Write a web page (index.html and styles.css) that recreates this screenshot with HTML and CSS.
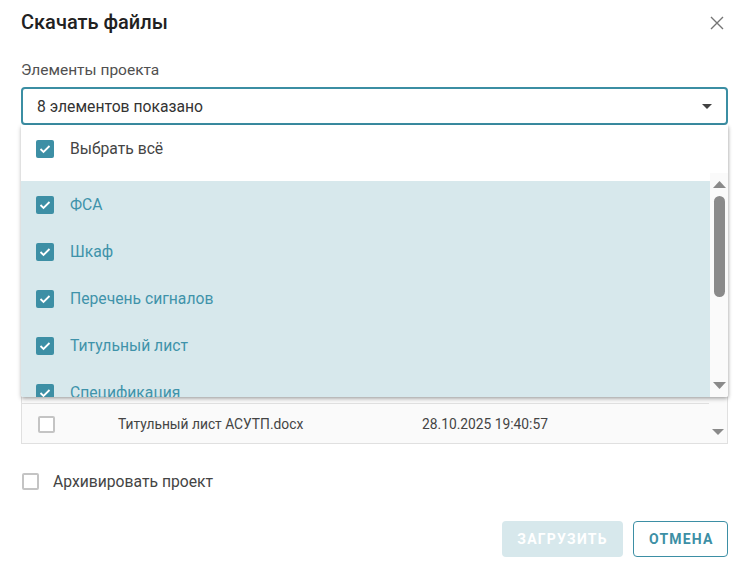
FILE: index.html
```html
<!DOCTYPE html>
<html lang="ru">
<head>
<meta charset="utf-8">
<link rel="stylesheet" href="styles.css">
</head>
<body>
<div class="dialog">
  <div class="header">
    <h1 class="title">Скачать файлы</h1>
    <svg class="close" width="14" height="14" viewBox="0 0 14 14"><path d="M1 1L13 13M13 1L1 13" stroke="#757575" stroke-width="1.4" fill="none"/></svg>
  </div>
  <div class="label">Элементы проекта</div>
  <div class="field">
    <div class="select">
      <span>8 элементов показано</span>
      <svg class="caret" width="10" height="5" viewBox="0 0 10 5"><path d="M0 0H10L5 5Z" fill="#424242"/></svg>
    </div>
    <div class="table">
      <div class="table-body">
        <div class="trow"><span class="cb"></span><span class="tname">Титульный лист АСУТП.docx</span><span class="tdate">28.10.2025 19:40:57</span></div>
      </div>
      <div class="table-scroll">
        <svg width="12" height="6" viewBox="0 0 12 6"><path d="M0 0H12L6 6Z" fill="#8a8a8a"/></svg>
      </div>
    </div>
    <div class="dropdown">
      <div class="opt-all">
        <span class="cbx on"><svg width="12" height="10" viewBox="0 0 12 10"><path d="M1.5 5L4.5 8L10.5 2" stroke="#fff" stroke-width="1.8" fill="none"/></svg></span>
        <span>Выбрать всё</span>
      </div>
      <div class="list-wrap">
        <div class="list">
          <div class="opt"><span class="cbx on"><svg width="12" height="10" viewBox="0 0 12 10"><path d="M1.5 5L4.5 8L10.5 2" stroke="#fff" stroke-width="1.8" fill="none"/></svg></span><span>ФСА</span></div>
          <div class="opt"><span class="cbx on"><svg width="12" height="10" viewBox="0 0 12 10"><path d="M1.5 5L4.5 8L10.5 2" stroke="#fff" stroke-width="1.8" fill="none"/></svg></span><span>Шкаф</span></div>
          <div class="opt"><span class="cbx on"><svg width="12" height="10" viewBox="0 0 12 10"><path d="M1.5 5L4.5 8L10.5 2" stroke="#fff" stroke-width="1.8" fill="none"/></svg></span><span>Перечень сигналов</span></div>
          <div class="opt"><span class="cbx on"><svg width="12" height="10" viewBox="0 0 12 10"><path d="M1.5 5L4.5 8L10.5 2" stroke="#fff" stroke-width="1.8" fill="none"/></svg></span><span>Титульный лист</span></div>
          <div class="opt"><span class="cbx on"><svg width="12" height="10" viewBox="0 0 12 10"><path d="M1.5 5L4.5 8L10.5 2" stroke="#fff" stroke-width="1.8" fill="none"/></svg></span><span>Спецификация</span></div>
        </div>
        <div class="scrollbar">
          <svg class="sb-up" width="13" height="7" viewBox="0 0 13 7"><path d="M0 7H13L6.5 0Z" fill="#8a8a8a"/></svg>
          <div class="thumb"></div>
          <div class="sb-space"></div>
          <svg class="sb-down" width="13" height="7" viewBox="0 0 13 7"><path d="M0 0H13L6.5 7Z" fill="#8a8a8a"/></svg>
        </div>
      </div>
    </div>
  </div>
  <label class="archive">
    <span class="cb"></span>
    <span>Архивировать проект</span>
  </label>
  <div class="actions">
    <button class="btn btn-primary">Загрузить</button>
    <button class="btn btn-outline">Отмена</button>
  </div>
</div>
</body>
</html>
```

FILE: styles.css
```css
* { box-sizing: border-box; }
html, body { margin: 0; padding: 0; background: #fff; }
body {
  font-family: Roboto, "Liberation Sans", sans-serif;
  color: #424242;
  width: 750px;
  height: 567px;
  overflow: hidden;
}
.dialog {
  padding: 0 22px 0 21px;
}
.header {
  display: flex;
  align-items: center;
  justify-content: space-between;
  height: 44px;
}
.title {
  margin: 0;
  font-size: 20px;
  font-weight: 500;
  color: #212121;
  line-height: 22px;
  margin-top: -1px;
}
.close { margin-right: 4px; margin-top: 1px; }
.label {
  margin-top: 16px;
  font-size: 15.5px;
  line-height: 20px;
  color: #505050;
}
.field {
  position: relative;
  margin-top: 7px;
}
.select {
  height: 38px;
  border: 2px solid #3b8ea3;
  border-radius: 4px;
  display: flex;
  align-items: center;
  justify-content: space-between;
  padding: 0 14px 0 14px;
  font-size: 15.7px;
  color: #333;
}
.caret { margin-top: 1px; }
.table {
  margin-top: 9px;
  height: 310px;
  border: 1px solid #e0e0e0;
  border-top: none;
  display: flex;
  background: #fafafa;
}
.table-body {
  flex: 1;
  display: flex;
  flex-direction: column;
  justify-content: flex-end;
}
.trow {
  height: 40px;
  border-top: 1px solid #e0e0e0;
  display: flex;
  align-items: center;
  padding-left: 16px;
  font-size: 13.8px;
  color: #444;
}
.trow .cb { margin-top: 1px; }
.tname { margin-left: 63px; width: 304px; }
.table-scroll {
  width: 18px;
  display: flex;
  flex-direction: column;
  justify-content: flex-end;
  align-items: center;
  padding-bottom: 8px;
}
.cb {
  width: 17px;
  height: 17px;
  border: 2px solid #c4c4c4;
  border-radius: 2px;
  background: #fff;
  flex: none;
}
.dropdown {
  position: absolute;
  top: 38px;
  left: 0;
  right: 0;
  height: 272px;
  background: #fff;
  box-shadow: 0 2px 4px rgba(0,0,0,0.25), 1px 1px 3px rgba(0,0,0,0.12);
  border-radius: 0 0 2px 2px;
  display: flex;
  flex-direction: column;
  overflow: hidden;
}
.opt-all {
  height: 48px;
  display: flex;
  align-items: center;
  padding-left: 15px;
  font-size: 15.7px;
  color: #444;
  padding-bottom: 1px;
}
.cbx {
  width: 18px;
  height: 18px;
  border-radius: 2px;
  background: #3d8fa5;
  display: flex;
  align-items: center;
  justify-content: center;
  margin-right: 16px;
  flex: none;
}
.list-wrap {
  flex: 1;
  display: flex;
  min-height: 0;
}
.list {
  flex: 1;
  padding-top: 8px;
  overflow: hidden;
}
.opt {
  height: 47px;
  display: flex;
  align-items: center;
  padding-left: 15px;
  background: #d7e8ec;
  font-size: 15.7px;
  color: #3f93aa;
}
.scrollbar {
  width: 18px;
  background: #fafafa;
  display: flex;
  flex-direction: column;
  align-items: center;
  padding-top: 8px;
  padding-bottom: 8px;
}
.sb-up { flex: none; }
.thumb {
  margin-top: 8px;
  width: 11px;
  height: 101px;
  border-radius: 6px;
  background: #8a8a8a;
  flex: none;
}
.sb-space { flex: 1; }
.sb-down { flex: none; }
.archive {
  display: flex;
  align-items: center;
  margin-top: 28px;
  font-size: 15.7px;
  color: #444;
  gap: 14px;
  padding-left: 1px;
}
.actions {
  display: flex;
  justify-content: flex-end;
  gap: 10px;
  margin-top: 30px;
}
.btn {
  height: 36px;
  border-radius: 4px;
  font-family: Roboto, "Liberation Sans", sans-serif;
  font-size: 14px;
  font-weight: 700;
  letter-spacing: 1.2px;
  text-transform: uppercase;
  padding: 0 15px;
  cursor: pointer;
}
.btn-primary {
  background: #d7e8ec;
  border: none;
  color: #fff;
  width: 121px;
}
.btn-outline {
  background: #fff;
  border: 1px solid #3d8fa5;
  color: #3d8fa5;
  width: 95px;
}
```
